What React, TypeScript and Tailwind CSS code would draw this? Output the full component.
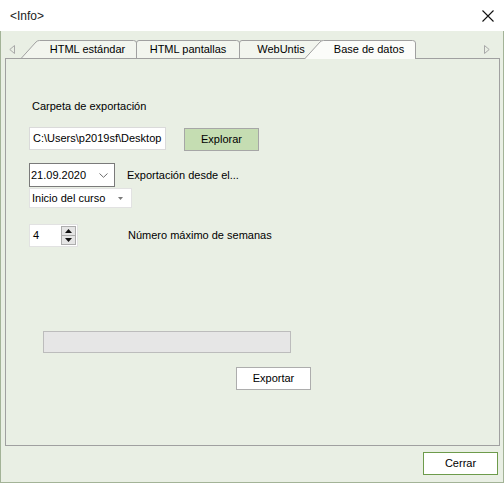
import React from "react";

const FONT = "font-['Liberation_Sans',Arial,sans-serif]";

function TabShape({
  width,
  height,
  slant,
  fill,
  open,
}: {
  width: number;
  height: number;
  slant: number;
  fill: string;
  open?: boolean;
}) {
  const w = width - 0.5;
  const d =
    slant > 0
      ? `M0.5,${height} L${slant - 2},2 Q${slant - 0.5},0.5 ${slant + 1.5},0.5 L${w - 3},0.5 Q${w},0.5 ${w},3 L${w},${height}`
      : `M0.5,${height} L0.5,3 Q0.5,0.5 3,0.5 L${w - 3},0.5 Q${w},0.5 ${w},3 L${w},${height}`;
  return (
    <svg
      className="absolute inset-0"
      width={width}
      height={height}
      viewBox={`0 0 ${width} ${height}`}
    >
      <path d={d + (open ? "" : " Z")} fill={fill} stroke="none" />
      <path d={d} fill="none" stroke="#a0a0a0" strokeWidth="1" />
    </svg>
  );
}

function Tab({
  label,
  width,
  slant = 0,
  selected = false,
  className = "",
}: {
  label: string;
  width: number;
  slant?: number;
  selected?: boolean;
  className?: string;
}) {
  const height = selected ? 19 : 18;
  return (
    <div
      className={`relative shrink-0 ${selected ? "z-10 h-[19px]" : "h-[18px]"} ${className}`}
      style={{ width }}
    >
      <TabShape
        width={width}
        height={height}
        slant={slant}
        fill={selected ? "#fbfcf9" : "#f2f5ee"}
        open={selected}
      />
      <div
        className="relative flex h-[18px] items-center justify-center text-[11px] leading-none text-black"
        style={{ paddingLeft: slant }}
      >
        {label}
      </div>
    </div>
  );
}

export default function App() {
  return (
    <div className={`flex h-[483px] w-[504px] flex-col overflow-hidden ${FONT}`}>
      {/* Title bar */}
      <div className="flex h-[31px] shrink-0 items-center justify-between bg-white pl-[10px] pr-[10px]">
        <span className="text-[12px] text-[#222]">&lt;Info&gt;</span>
        <svg width="12" height="12" viewBox="0 0 12 12">
          <path d="M0.5 0.5 L11.5 11.5 M11.5 0.5 L0.5 11.5" stroke="#111" strokeWidth="1.1" />
        </svg>
      </div>

      {/* Body */}
      <div className="flex flex-1 flex-col border-x border-b border-[#a3b397] bg-[#e9efe4] pt-[9px]">
        {/* Tab strip */}
        <div className="flex h-[18px] shrink-0 items-start">
          <div className="flex h-[18px] w-[20px] shrink-0 items-center pl-[8px]">
            <svg width="6" height="9" viewBox="0 0 6 9">
              <path d="M5.5 0.5 L0.8 4.5 L5.5 8.5 Z" fill="none" stroke="#a8a8a8" />
            </svg>
          </div>
          <Tab label="HTML estándar" width={116} slant={17} />
          <Tab label="HTML pantallas" width={104} className="-ml-px" />
          <Tab label="WebUntis" width={84} className="-ml-px" />
          <Tab label="Base de datos" width={112} slant={18} selected className="-ml-[19px]" />
          <div className="flex-1" />
          <div className="mr-[13px] flex h-[18px] items-center">
            <svg width="6" height="9" viewBox="0 0 6 9">
              <path d="M0.5 0.5 L5.2 4.5 L0.5 8.5 Z" fill="none" stroke="#a8a8a8" />
            </svg>
          </div>
        </div>

        {/* Panel */}
        <div className="ml-[4px] mr-[3px] flex h-[388px] shrink-0 flex-col border border-[#a0a0a0] pl-[23px] text-[11px] text-black">
          <div className="ml-[3px] mt-[41px] h-[13px] leading-[13px]">Carpeta de exportación</div>

          <div className="mt-[14px] flex items-start">
            <div className="flex h-[23px] w-[137px] items-center border border-[#dadada] bg-white pl-[3px]">
              C:\Users\p2019sf\Desktop
            </div>
            <button className="ml-[18px] mt-px flex h-[23px] w-[75px] items-center justify-center border border-[#a6a6a6] bg-[#c5ddb2]">
              Explorar
            </button>
          </div>

          <div className="mt-[12px] flex items-center">
            <div className="flex h-[24px] w-[86px] items-center justify-between border border-[#7a7a7a] bg-white pl-[1px] pr-[6px]">
              <span>21.09.2020</span>
              <svg width="9" height="5" viewBox="0 0 9 5">
                <path d="M0.5 0.5 L4.5 4.3 L8.5 0.5" fill="none" stroke="#6e6e6e" />
              </svg>
            </div>
            <span className="ml-[12px]">Exportación desde el...</span>
          </div>

          <div className="mt-px flex h-[20px] w-[103px] items-center justify-between border border-[#e2e2e2] bg-white pl-[2px] pr-[8px]">
            <span>Inicio del curso</span>
            <svg width="5" height="3" viewBox="0 0 5 3">
              <path d="M0 0 L5 0 L2.5 3 Z" fill="#7a7a7a" />
            </svg>
          </div>

          <div className="mt-[16px] flex items-center">
            <div className="flex h-[23px] w-[49px] border border-[#e2e2e2] bg-white">
              <div className="flex flex-1 items-center pl-[3px]">4</div>
              <div className="flex w-[16px] flex-col py-px pr-px">
                <div className="flex flex-1 items-center justify-center border border-[#adadad] bg-[#e5e5e5]">
                  <svg width="7" height="4" viewBox="0 0 7 4">
                    <path d="M0 4 L7 4 L3.5 0 Z" fill="#111" />
                  </svg>
                </div>
                <div className="flex flex-1 items-center justify-center border border-t-0 border-[#adadad] bg-[#e5e5e5]">
                  <svg width="7" height="4" viewBox="0 0 7 4">
                    <path d="M0 0 L7 0 L3.5 4 Z" fill="#111" />
                  </svg>
                </div>
              </div>
            </div>
            <span className="ml-[50px]">Número máximo de semanas</span>
          </div>

          <div className="ml-[14px] mt-[84px] h-[22px] w-[248px] border border-[#bcbcbc] bg-[#e6e6e6]" />

          <button className="ml-[207px] mt-[14px] flex h-[23px] w-[75px] items-center justify-center border border-[#adadad] bg-white">
            Exportar
          </button>
        </div>

        <div className="mr-[5px] mt-[6px] flex justify-end">
          <button className="flex h-[23px] w-[75px] items-center justify-center border border-[#6d9b4b] bg-white text-[11px] text-black">
            Cerrar
          </button>
        </div>
      </div>
    </div>
  );
}
